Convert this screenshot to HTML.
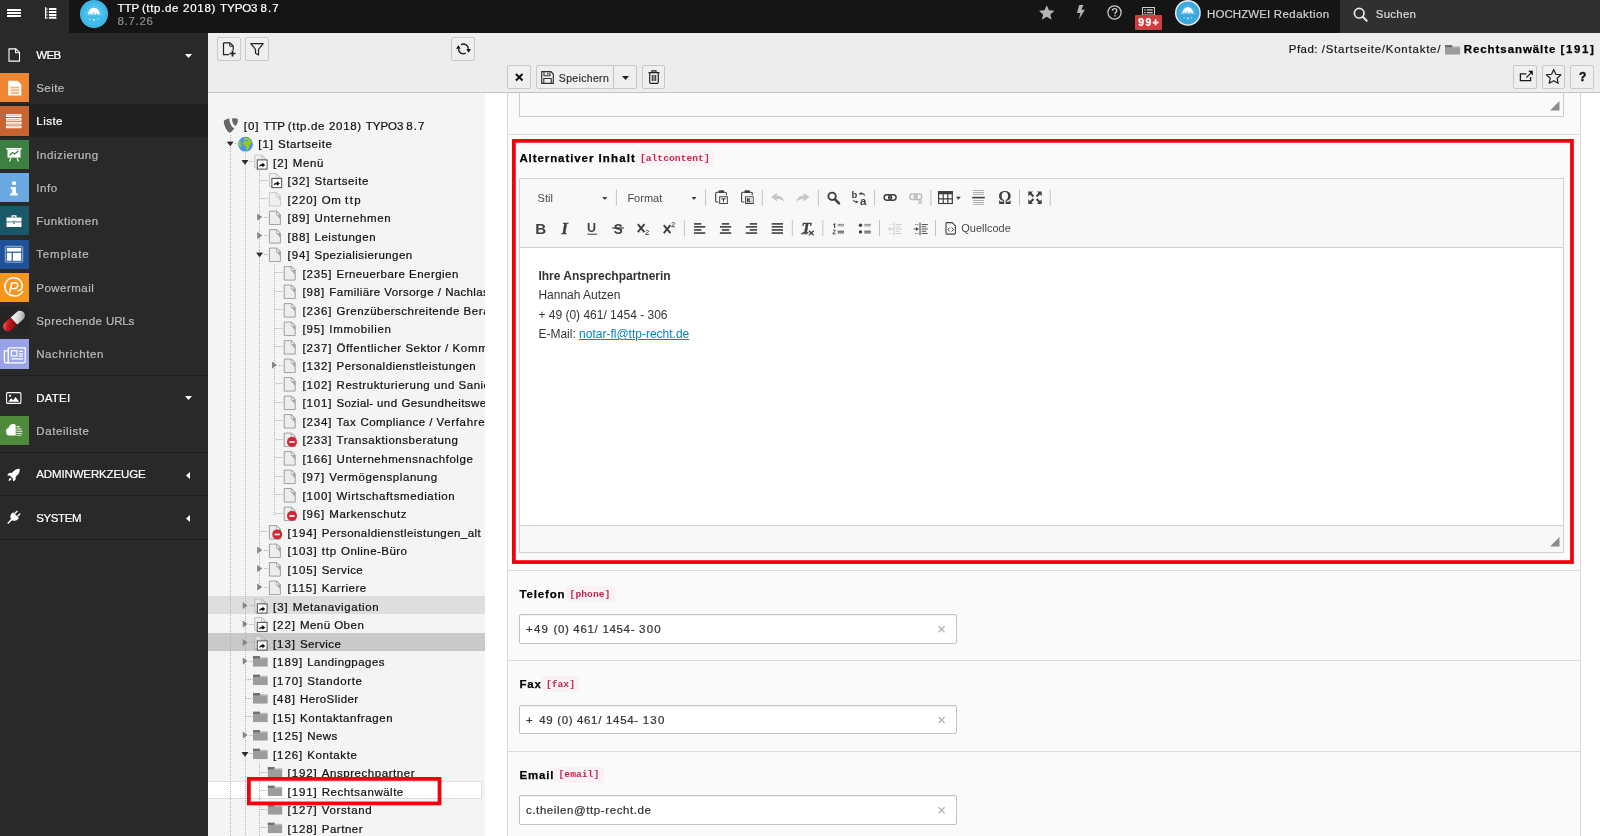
<!DOCTYPE html>
<html lang="de"><head><meta charset="utf-8"><title>TYPO3</title>
<style>

*{box-sizing:border-box;margin:0;padding:0}
html,body{width:1600px;height:836px;overflow:hidden;background:#fff;font-family:"Liberation Sans",sans-serif;}
body{position:relative;will-change:transform}
.a{position:absolute}
.t{-webkit-text-stroke:0.22px;position:absolute;white-space:nowrap;line-height:16px;height:16px;font-family:"Liberation Sans",sans-serif;}
svg{position:absolute;overflow:visible}
.btn{position:absolute;background:#efefef;border:1px solid #c9c9c9;border-radius:2px;}
.code{position:absolute;background:#f9f2f4;border-radius:3px;}
.ns{-webkit-text-stroke:0}
.mono{font-family:"Liberation Mono",monospace;}
.inp{position:absolute;background:#fff;border:1px solid #c2c2c2;border-radius:2px;box-shadow:inset 0 1px 1px rgba(0,0,0,.06);}
.sep{position:absolute;height:1px;background:#dcdcdc}
.vd{position:absolute;width:1px;background-image:linear-gradient(#b2b2b2 50%,rgba(0,0,0,0) 50%);background-size:1px 2px;}
.hd{position:absolute;height:1px;background-image:linear-gradient(90deg,#b2b2b2 50%,rgba(0,0,0,0) 50%);background-size:2px 1px;}
.cks{position:absolute;width:1px;background:#bcbcbc;height:16px}

</style></head>
<body>
<svg width="0" height="0" style="position:absolute">
<defs>
<symbol id="pg" viewBox="0 0 16 16"><path d="M2.500 1.500h7.500l3.500 3.500v10h-11z" fill="#ededed" stroke="#9f9f9f" stroke-width="1"/><path d="M9.600 1.600v3.900h3.800z" fill="#fbfbfb" stroke="#9f9f9f" stroke-width=".8"/><path d="M10 5.700h3.300v4z" fill="#a3a3a3"/></symbol>
<symbol id="sc" viewBox="0 0 16 16"><g opacity=".6"><path d="M1 .5h7l3.500 3.500v9.500h-10.500z" fill="#ededed" stroke="#9f9f9f" stroke-width="1"/><path d="M7.600 .6v3.900h3.800z" fill="#fbfbfb" stroke="#9f9f9f" stroke-width=".8"/></g><rect x="3.500" y="5.500" width="9.800" height="9.200" fill="#fff" stroke="#4d4d4d" stroke-width="1"/><path d="M5.300 12.600c.2-2 1.400-2.900 3.300-2.900v-1.500l2.800 2.400-2.800 2.400v-1.500c-1.500-.1-2.500.2-3.300 1.100z" fill="#111"/></symbol>
<symbol id="fo" viewBox="0 0 15 11" preserveAspectRatio="none"><path d="M0 0h7v2h8v9h-15z" fill="#9c9c9c"/><path d="M0 0h7v2.600h-7z" fill="#707070"/><path d="M7 1.300h8v1.500h-8z" fill="#bcbcbc"/></symbol>
<symbol id="hid" viewBox="0 0 10 10"><circle cx="5" cy="5" r="5" fill="#d02830"/><rect x="2.400" y="4.200" width="5.200" height="1.700" fill="#fff"/></symbol>
<symbol id="ad" viewBox="0 0 8 6"><path d="M0 .3h8l-4 5.4z" fill="#2a2a2a"/></symbol>
<symbol id="ar" viewBox="0 0 6 8"><path d="M.2 0v8l5.600-4z" fill="#858585"/></symbol>
<symbol id="globe" viewBox="0 0 16 16"><circle cx="8" cy="8" r="7.700" fill="#4696eb"/><path d="M6.300 1.700c1.600-.7 3.700-.6 5.300.3l1.900 1.900.9 2.300-.6 1-1.100-.3.400 1.500-1.500 1.900-.5 2.800-1.300 1.300-1-.5-.5-2.300.2-1.700-2-.5-1.200-1.800.6-2 1.600-1 2.500.6 1.500-.3-1.200-.9-2.200.3-1.300-.8z" fill="#98c81e"/><path d="M1.300 5.600l1.500-1.300.9 1.600-.8 2 1.100 2.400-.8 1.200-1.700-1.600-.9-2.400z" fill="#98c81e"/></symbol>
<symbol id="t3" viewBox="0 0 16 16"><path d="M11.700 10.400c-.2.100-.4.100-.6.100-1.900 0-4.700-6.500-4.700-8.700 0-.8.200-1.100.5-1.300-2.300.3-5.100 1.100-6 2.200-.2.300-.3.700-.3 1.200 0 3.400 3.700 11.300 6.300 11.300 1.200 0 3.200-2 4.800-4.800M10.500.300c2.400 0 4.800.400 4.800 1.700 0 2.700-1.700 6-2.600 6-1.600 0-3.500-4.300-3.500-6.500 0-1 .4-1.200 1.300-1.200" fill="#666"/></symbol>
</defs></svg>
<div class="a" style="left:0;top:0;width:1600px;height:33px;background:#151515"></div>
<div class="a" style="left:0;top:0;width:69px;height:33px;background:#292929"></div>
<div class="a" style="left:1339.5px;top:0;width:260.5px;height:33px;background:#303030"></div>
<div class="a" style="left:7px;top:9px;width:13.5px;height:2px;background:#fff;border-radius:.5px"></div>
<div class="a" style="left:7px;top:12px;width:13.5px;height:2px;background:#fff;border-radius:.5px"></div>
<div class="a" style="left:7px;top:15px;width:13.5px;height:2px;background:#fff;border-radius:.5px"></div>
<svg style="left:44px;top:6px" width="14" height="14" viewBox="44 6 14 14"><g fill="#fff"><rect x="45" y="7.200" width="1.200" height="11.700"/><rect x="46" y="8.7" width="2.300" height=".9" opacity=".85"/><rect x="49" y="8.1" width="7.400" height="2" rx=".3"/><rect x="46" y="11.549999999999999" width="2.300" height=".9" opacity=".85"/><rect x="49" y="10.95" width="7.400" height="2" rx=".3"/><rect x="46" y="14.5" width="2.300" height=".9" opacity=".85"/><rect x="49" y="13.9" width="7.400" height="2" rx=".3"/><rect x="46" y="17.400000000000002" width="2.300" height=".9" opacity=".85"/><rect x="49" y="16.8" width="7.400" height="2" rx=".3"/></g></svg>
<svg style="left:80px;top:-0.3000000000000007px" width="28" height="28" viewBox="0 0 28 28"><circle cx="14" cy="14" r="14" fill="#43bdea"/><circle cx="14" cy="14" r="12.300" fill="none" stroke="#2fa6d6" stroke-width=".6"/><g stroke="#a8e0f5" stroke-width=".5"><path d="M14 14.500l-8.500-3M14 14.500l-7-6M14 14.500l-3.500-8.300M14 14.500l0-9.300M14 14.500l3.500-8.300M14 14.500l7-6M14 14.500l8.500-3M14 14.500l-9 .3M14 14.500l9 .3"/></g><path d="M8 14.600c.3-3.900 2.800-6.800 6-6.800s5.700 2.900 6 6.800l-1.800-.1-1.300-1.800-1.700 2-1.500-3-2.200 3-1.400-1.600-.9 1.500z" fill="#fff"/><rect x="9.200" y="18.800" width="1.200" height="1.200" fill="#c9ecf9"/><rect x="13.200" y="19.200" width="1.500" height="1.500" fill="#fff"/><rect x="17.500" y="18.600" width="1" height="1.300" fill="#c9ecf9"/></svg>
<span class="t " style="left:117.50px;top:-0.20px;font-size:11.49px;color:#fff;"><span style="letter-spacing:-0.076px">TTP </span><span style="letter-spacing:0.675px">(ttp.de </span><span style="letter-spacing:0.740px">2018) </span><span style="letter-spacing:-0.048px">TYPO3 </span><span style="letter-spacing:1.063px">8.7</span></span>
<span class="t " style="left:117.50px;top:13.20px;font-size:11.49px;color:#8c8c8c;"><span style="letter-spacing:0.711px">8.7.26</span></span>
<svg style="left:1038.500px;top:5px" width="15.500" height="15" viewBox="0 0 16 15"><path d="M8 0l2.300 5.200 5.700.6-4.300 3.800 1.300 5.400-5-3-5 3 1.300-5.400-4.300-3.800 5.700-.6z" fill="#b4b4b4"/></svg>
<svg style="left:1075.500px;top:5px" width="9" height="14.500" viewBox="0 0 9 15"><path d="M3.200 0h4.300l-2 5h3.500l-6.200 10 1.600-6.800h-3.600z" fill="#b4b4b4"/></svg>
<svg style="left:1106.500px;top:5px" width="15" height="15" viewBox="0 0 15 15"><circle cx="7.500" cy="7.500" r="6.600" fill="none" stroke="#c9c9c9" stroke-width="1.300"/><path d="M5.300 5.800c.1-1.400 1-2.200 2.300-2.200 1.300 0 2.200.8 2.200 1.900 0 1.700-1.800 1.700-1.800 3.400" fill="none" stroke="#c9c9c9" stroke-width="1.400"/><rect x="7.200" y="10" width="1.500" height="1.500" fill="#b4b4b4"/></svg>
<svg style="left:1142px;top:7px" width="13" height="8.500" viewBox="0 0 13 8.500"><rect x=".5" y=".5" width="12" height="7.500" fill="none" stroke="#cfcfcf" stroke-width="1"/><g fill="#cfcfcf"><rect x="2.200" y="2.300" width="1.500" height="1.300"/><rect x="4.700" y="2.300" width="6" height="1.300"/><rect x="2.200" y="5" width="1.500" height="1.300"/><rect x="4.700" y="5" width="6" height="1.300"/></g></svg>
<div class="a" style="left:1135px;top:15px;width:26.500px;height:14.500px;background:#cf3e3e;border-radius:1px"></div>
<span class="t " style="left:1138.20px;top:15.30px;font-size:10.45px;color:#fff;font-weight:bold;-webkit-text-stroke:0.25px;"><span style="letter-spacing:1.387px">99+</span></span>
<svg style="left:1175.1px;top:-0.3000000000000007px" width="25.8" height="25.8" viewBox="0 0 28 28"><circle cx="14" cy="14" r="14" fill="#f2f2f2"/><circle cx="14" cy="14" r="12.500" fill="#3aa9e0"/><g stroke="#a8e0f5" stroke-width=".5"><path d="M14 14.500l-8.500-3M14 14.500l-7-6M14 14.500l-3.500-8.300M14 14.500l0-9.300M14 14.500l3.500-8.300M14 14.500l7-6M14 14.500l8.500-3M14 14.500l-9 .3M14 14.500l9 .3"/></g><path d="M8 14.600c.3-3.900 2.800-6.800 6-6.800s5.700 2.900 6 6.800l-1.800-.1-1.300-1.800-1.700 2-1.500-3-2.200 3-1.400-1.600-.9 1.500z" fill="#fff"/><rect x="9.200" y="18.800" width="1.200" height="1.200" fill="#c9ecf9"/><rect x="13.200" y="19.200" width="1.500" height="1.500" fill="#fff"/><rect x="17.500" y="18.600" width="1" height="1.300" fill="#c9ecf9"/></svg>
<span class="t " style="left:1207.00px;top:5.60px;font-size:11.49px;color:#cfcfcf;"><span style="letter-spacing:0.102px">HOCHZWEI </span><span style="letter-spacing:0.481px">Redaktion</span></span>
<svg style="left:1353px;top:6.500px" width="15" height="15" viewBox="0 0 15 15"><circle cx="6.200" cy="6.200" r="4.800" fill="none" stroke="#e6e6e6" stroke-width="1.700"/><path d="M9.700 9.700l4 4" stroke="#e6e6e6" stroke-width="2" stroke-linecap="round"/></svg>
<span class="t " style="left:1375.75px;top:5.60px;font-size:11.49px;color:#d6d6d6;"><span style="letter-spacing:0.256px">Suchen</span></span>
<div class="a" style="left:0;top:33px;width:207.5px;height:803px;background:#292929"></div>
<div class="a" style="left:0;top:104.3px;width:207.5px;height:33px;background:#212121"></div>
<div class="a" style="left:0;top:374.5px;width:207.5px;height:1px;background:#1f1f1f"></div>
<div class="a" style="left:0;top:451.5px;width:207.5px;height:1px;background:#1f1f1f"></div>
<div class="a" style="left:0;top:495.0px;width:207.5px;height:1px;background:#1f1f1f"></div>
<div class="a" style="left:0;top:538.5px;width:207.5px;height:1px;background:#1f1f1f"></div>
<svg style="left:7.5px;top:48px" width="13" height="14" viewBox="0 0 13 14"><path d="M1 .9h6.8l3.700 3.700v8.500h-10.500z" fill="none" stroke="#fff" stroke-width="1.100"/><path d="M7.600 1v3.800h3.800" fill="none" stroke="#fff" stroke-width="1.100"/></svg>
<span class="t " style="left:36.25px;top:47.20px;font-size:11.49px;color:#fff;"><span style="letter-spacing:-0.586px">WEB</span></span>
<svg style="left:184.5px;top:53.5px" width="7" height="4" viewBox="0 0 7 4"><path d="M0 0h7l-3.500 4z" fill="#fff"/></svg>
<div class="a" style="left:0;top:73.10px;width:28.8px;height:29.2px;background:#ee8634"></div>
<svg style="left:5.65px;top:78.95px" width="17.5" height="17.5" viewBox="0 0 16 16"><path d="M2 1.500h8.500l3.500 3.500v10h-12z" fill="#fff"/><g fill="#f4b27c"><rect x="4" y="7" width="8" height="1.600"/><rect x="4" y="9.500" width="8" height="1.600"/><rect x="4" y="12" width="8" height="1.600"/></g></svg>
<span class="t " style="left:36.25px;top:80.00px;font-size:11.49px;color:#b9b9b9;"><span style="letter-spacing:0.452px">Seite</span></span>
<div class="a" style="left:0;top:106.38px;width:28.8px;height:29.2px;background:#c86432"></div>
<svg style="left:6.40px;top:112.98px" width="16" height="16" viewBox="0 0 16 16"><g fill="#fff"><rect x="0" y="1.300" width="15.500" height="2.800" rx=".6"/><rect x="0" y="5" width="15.500" height="2.800" rx=".6"/><rect x="0" y="8.700" width="15.500" height="2.800" rx=".6"/><rect x="0" y="12.400" width="15.500" height="2.800" rx=".6"/></g><g fill="#e3a988"><rect x="1.200" y="2.300" width="13" height=".8"/><rect x="1.200" y="6" width="13" height=".8"/><rect x="1.200" y="9.700" width="13" height=".8"/><rect x="1.200" y="13.400" width="13" height=".8"/></g></svg>
<span class="t " style="left:36.25px;top:113.28px;font-size:11.49px;color:#fff;"><span style="letter-spacing:0.497px">Liste</span></span>
<div class="a" style="left:0;top:139.66px;width:28.8px;height:29.2px;background:#3e8042"></div>
<svg style="left:6.40px;top:146.26px" width="16" height="16" viewBox="0 0 16 16"><rect x=".3" y="2" width="15.400" height="1.600" fill="#fff"/><rect x="1.500" y="3.600" width="13" height="8" fill="#fff"/><path d="M3.500 9.500l3-3 2 1.500 4-3" fill="none" stroke="#3e8042" stroke-width="1.100"/><path d="M5 12l-1.500 3.500M11 12l1.500 3.500" stroke="#fff" stroke-width="1.100"/></svg>
<span class="t " style="left:36.25px;top:146.56px;font-size:11.49px;color:#b9b9b9;"><span style="letter-spacing:0.579px">Indizierung</span></span>
<div class="a" style="left:0;top:172.94px;width:28.8px;height:29.2px;background:#6aa9e2"></div>
<svg style="left:6.40px;top:179.54px" width="16" height="16" viewBox="0 0 16 16"><g fill="#fff"><rect x="6.200" y="1.500" width="3.700" height="3.400"/><path d="M4.700 7h5.200v6.300h1.800v2.200h-7.400v-2.200h1.800v-4.100h-1.400z"/></g></svg>
<span class="t " style="left:36.25px;top:179.84px;font-size:11.49px;color:#b9b9b9;"><span style="letter-spacing:0.604px">Info</span></span>
<div class="a" style="left:0;top:206.22px;width:28.8px;height:29.2px;background:#1a5768"></div>
<svg style="left:6.40px;top:212.82px" width="16" height="16" viewBox="0 0 16 16"><g fill="#fff"><path d="M5.500 2.300h5v2.300h-1.200v-1.200h-2.600v1.200h-1.200z"/><rect x=".5" y="4.500" width="15" height="4"/><rect x=".5" y="9.300" width="15" height="4.700"/></g><rect x="7" y="7.800" width="2" height="2.800" fill="#1a5768"/><rect x="7.500" y="8.300" width="1" height="1.800" fill="#fff"/></svg>
<span class="t " style="left:36.25px;top:213.12px;font-size:11.49px;color:#b9b9b9;"><span style="letter-spacing:0.553px">Funktionen</span></span>
<div class="a" style="left:0;top:239.50px;width:28.8px;height:29.2px;background:#20529a"></div>
<svg style="left:6.40px;top:246.10px" width="16" height="16" viewBox="0 0 16 16"><rect x="-.7" y=".3" width="17.400" height="15.900" rx="1" fill="none" stroke="#a8bedd" stroke-width=".9"/><g fill="#fff"><rect x=".8" y="1.800" width="14.400" height="3.800"/><rect x=".8" y="6.800" width="4.800" height="8"/><rect x="6.800" y="6.800" width="8.400" height="8"/></g></svg>
<span class="t " style="left:36.25px;top:246.40px;font-size:11.49px;color:#b9b9b9;"><span style="letter-spacing:0.828px">Template</span></span>
<div class="a" style="left:0;top:272.78px;width:28.8px;height:29.2px;background:#f5961e"></div>
<svg style="left:4.1px;top:277.08px" width="19.5" height="19.5" viewBox="0 0 19 19"><g fill="none" stroke="#fff" stroke-width="1.500" stroke-linecap="round"><path d="M18.300 14.200C16 17.500 12.500 18.700 9.300 18.400 4.200 18 .5 13.800 .8 9 1.100 4 5.300 .5 10 .8 14.800 1.100 18 4.800 17.800 9 17.700 11.300 16.300 13.300 13.800 13.200"/><path d="M7.600 5.600L5.700 14.600"/><path d="M7.300 7C8.500 5.200 13.300 4.600 13.400 8 13.500 11.200 9.500 12.300 6.800 10.800"/></g></svg>
<span class="t " style="left:36.25px;top:279.68px;font-size:11.49px;color:#b9b9b9;"><span style="letter-spacing:0.494px">Powermail</span></span>
<div class="a" style="left:0;top:306.06px;width:28.8px;height:29.2px;background:#252525"></div>
<svg style="left:.9px;top:308.06px" width="26" height="26" viewBox="0 0 24 24"><defs><linearGradient id="pr" x1="0" y1="0" x2="1" y2="1"><stop offset="0" stop-color="#f2787c"/><stop offset=".45" stop-color="#c4161c"/><stop offset="1" stop-color="#7a0a0e"/></linearGradient><linearGradient id="pw" x1="0" y1="0" x2="1" y2="1"><stop offset="0" stop-color="#fff"/><stop offset=".5" stop-color="#d8d8d8"/><stop offset="1" stop-color="#8a8a8a"/></linearGradient></defs><g transform="rotate(-42 12 12)"><path d="M4.500 7.500h7.500v9h-7.500a4.500 4.500 0 0 1 0-9z" fill="url(#pr)"/><path d="M12 7.500h7.500a4.500 4.500 0 0 1 0 9h-7.500z" fill="url(#pw)"/></g></svg>
<span class="t " style="left:36.25px;top:312.96px;font-size:11.49px;color:#b9b9b9;"><span style="letter-spacing:0.420px">Sprechende </span><span style="letter-spacing:-0.146px">URLs</span></span>
<div class="a" style="left:0;top:339.34px;width:28.8px;height:29.2px;background:#9aa3e6"></div>
<svg style="left:5.15px;top:344.69px" width="18.5" height="18.5" viewBox="0 0 16 16"><g fill="none" stroke="#fff" stroke-width="1.100"><path d="M2.800 2.500h14.700v11.500a1.500 1.500 0 0 1-1.500 1.500h-15a1.500 1.500 0 0 1-1.500-1.500v-9h3.300"/><path d="M2.800 2.500v11.500a1.500 1.500 0 0 1-1.500 1.500"/><rect x="5.500" y="5" width="4.800" height="4.500"/><path d="M12 5.500h3.500M12 7.700h3.500M12 9.700h3.500M5.500 12h10"/></g></svg>
<span class="t " style="left:36.25px;top:346.24px;font-size:11.49px;color:#b9b9b9;"><span style="letter-spacing:0.577px">Nachrichten</span></span>
<svg style="left:6px;top:391.500px" width="15.500" height="12" viewBox="0 0 15.500 12"><rect x=".6" y=".6" width="14.300" height="10.800" rx="1" fill="none" stroke="#fff" stroke-width="1.100"/><path d="M2.200 9.700l3-3.400 2 2 2.400-3.200 3.600 4.600z" fill="#fff"/><circle cx="4" cy="3.800" r="1.100" fill="#fff"/></svg>
<span class="t " style="left:36.25px;top:389.90px;font-size:11.49px;color:#fff;"><span style="letter-spacing:0.253px">DATEI</span></span>
<svg style="left:184.500px;top:396.200px" width="7" height="4" viewBox="0 0 7 4"><path d="M0 0h7l-3.500 4z" fill="#fff"/></svg>
<div class="a" style="left:0;top:416px;width:28.800px;height:29.200px;background:#4f8a3c"></div>
<svg style="left:5px;top:423px" width="18" height="14" viewBox="0 0 18 14"><path d="M1 8.500c0-2.500 1.500-3.300 2.500-3.400.5-2.500 2.500-4 4.800-4 1 0 1.900.4 2.400.8v10.600h-6.700c-2 0-3-1.700-3-4z" fill="#fff"/><g fill="#cfe3c7"><rect x="11.300" y="3" width="3.500" height="1.300"/><rect x="11.300" y="5.300" width="5" height="1.300"/><rect x="11.300" y="7.600" width="6" height="1.300"/><rect x="11.300" y="9.900" width="6" height="1.300"/><rect x="11.300" y="12.200" width="5" height=".8"/></g></svg>
<span class="t " style="left:36.25px;top:423.30px;font-size:11.49px;color:#b9b9b9;"><span style="letter-spacing:0.603px">Dateiliste</span></span>
<svg style="left:7.200px;top:468.200px" width="13.500" height="13.500" viewBox="0 0 14 14"><path d="M13.300 .7c-3.500 0-6 1.300-8 4.300l-3.300.3-1.800 2.500 3 .3 2.800 2.800.3 3 2.500-1.800.3-3.300c3-2 4.300-4.600 4.200-8.100z" fill="#fff"/><path d="M3.300 10.200c-1 .6-1.500 1.800-1.700 3.200 1.400-.2 2.600-.7 3.200-1.700z" fill="#fff"/></svg>
<span class="t " style="left:36.25px;top:466.40px;font-size:11.49px;color:#fff;"><span style="letter-spacing:-0.121px">ADMINWERKZEUGE</span></span>
<svg style="left:186px;top:471.500px" width="4" height="7" viewBox="0 0 4 7"><path d="M4 0v7l-4-3.500z" fill="#fff"/></svg>
<svg style="left:7px;top:511px" width="13.200" height="13.200" viewBox="0 0 15 15"><g transform="rotate(45 7.500 7.500)" fill="#fff"><rect x="4.500" y="-1" width="1.600" height="4.500" rx=".6"/><rect x="8.900" y="-1" width="1.600" height="4.500" rx=".6"/><path d="M2.800 3.600h9.400v2.600c0 2.300-1.600 4-3.700 4.400v1.400h-2v-1.400c-2.100-.4-3.700-2.100-3.700-4.400z"/><rect x="6.700" y="11.500" width="1.600" height="5.500"/></g></svg>
<span class="t " style="left:36.25px;top:510.20px;font-size:11.49px;color:#fff;"><span style="letter-spacing:-0.391px">SYSTEM</span></span>
<svg style="left:186px;top:514.500px" width="4" height="7" viewBox="0 0 4 7"><path d="M4 0v7l-4-3.500z" fill="#fff"/></svg>
<div class="a" style="left:207.5px;top:33px;width:1392.5px;height:59.5px;background:#ededed;border-bottom:1px solid #c3c3c3"></div>
<div class="a" style="left:207.5px;top:92.5px;width:277.5px;height:743.5px;background:#f4f4f4"></div>
<div class="btn" style="left:217.2px;top:37.2px;width:23.5px;height:23.5px"></div>
<div class="btn" style="left:245px;top:37.2px;width:23.5px;height:23.5px"></div>
<div class="btn" style="left:451.2px;top:37.2px;width:23.5px;height:23.5px"></div>
<svg style="left:221.500px;top:41.500px" width="15" height="15" viewBox="0 0 15 15"><path d="M1.500 .8h6.500l3.200 3.200v4.200M7 12.700h-5.500v-11.900" fill="none" stroke="#222" stroke-width="1.200"/><path d="M7.800 1v3.200h3.200" fill="none" stroke="#222" stroke-width="1"/><path d="M10.500 8.500v6M7.500 11.500h6" stroke="#222" stroke-width="1.700"/></svg>
<svg style="left:250px;top:42.500px" width="14" height="13" viewBox="0 0 14 13"><path d="M.8 .7h12.400l-4.700 5.700v5.600l-3-1.700v-3.900z" fill="none" stroke="#222" stroke-width="1.200" stroke-linejoin="round"/></svg>
<svg style="left:0;top:0" width="1600" height="100" viewBox="0 0 1600 100"><path d="M461.10 44.57A4.9 4.9 0 0 1 468.30 48.73" fill="none" stroke="#1a1a1a" stroke-width="1.400"/><path d="M465.70 53.23A4.9 4.9 0 0 1 458.50 49.07" fill="none" stroke="#1a1a1a" stroke-width="1.400"/><path d="M466.3 49.1h4.700l-2.400 3.600z" fill="#111"/><path d="M456 48.8h4.800l-2.400-3.600z" fill="#111"/></svg>
<div class="a" style="left:207.5px;top:596.30px;width:277.5px;height:17.5px;background:#dedede"></div>
<div class="a" style="left:207.5px;top:633.30px;width:277.5px;height:17.5px;background:#c9c9c9"></div>
<div class="a" style="left:207.5px;top:780.8px;width:274.3px;height:18.4px;background:#fff;border:1px solid #dedede;border-left:none"></div>
<div class="vd" style="left:229.80px;top:135.00px;height:701.00px"></div>
<div class="vd" style="left:244.60px;top:152.00px;height:684.00px"></div>
<div class="vd" style="left:259.40px;top:171.00px;height:417.50px"></div>
<div class="vd" style="left:259.40px;top:763.00px;height:73.00px"></div>
<div class="vd" style="left:274.20px;top:263.50px;height:251.00px"></div>
<div class="a" style="left:207.5px;top:92.5px;width:277.5px;height:743.5px;overflow:hidden">
<span class="t " style="left:36.25px;top:25.20px;font-size:11.49px;color:#111;"><span style="letter-spacing:0.935px">[0] </span><span style="letter-spacing:-0.085px">TTP </span><span style="letter-spacing:0.667px">(ttp.de </span><span style="letter-spacing:0.731px">2018) </span><span style="letter-spacing:-0.058px">TYPO3 </span><span style="letter-spacing:1.049px">8.7</span></span>
<span class="t " style="left:50.75px;top:43.70px;font-size:11.49px;color:#111;"><span style="letter-spacing:0.935px">[1] </span><span style="letter-spacing:0.593px">Startseite</span></span>
<span class="t " style="left:65.50px;top:62.20px;font-size:11.49px;color:#111;"><span style="letter-spacing:0.935px">[2] </span><span style="letter-spacing:0.612px">Menü</span></span>
<span class="t " style="left:80.10px;top:80.70px;font-size:11.49px;color:#111;"><span style="letter-spacing:0.916px">[32] </span><span style="letter-spacing:0.593px">Startseite</span></span>
<span class="t " style="left:80.10px;top:99.20px;font-size:11.49px;color:#111;"><span style="letter-spacing:0.903px">[220] </span><span style="letter-spacing:0.534px">Om </span><span style="letter-spacing:1.440px">ttp</span></span>
<span class="t " style="left:80.10px;top:117.70px;font-size:11.49px;color:#111;"><span style="letter-spacing:0.916px">[89] </span><span style="letter-spacing:0.664px">Unternehmen</span></span>
<span class="t " style="left:80.10px;top:136.20px;font-size:11.49px;color:#111;"><span style="letter-spacing:0.916px">[88] </span><span style="letter-spacing:0.534px">Leistungen</span></span>
<span class="t " style="left:80.10px;top:154.70px;font-size:11.49px;color:#111;"><span style="letter-spacing:0.916px">[94] </span><span style="letter-spacing:0.435px">Spezialisierungen</span></span>
<span class="t " style="left:94.90px;top:173.20px;font-size:11.49px;color:#111;"><span style="letter-spacing:0.903px">[235] </span><span style="letter-spacing:0.454px">Erneuerbare </span><span style="letter-spacing:0.479px">Energien</span></span>
<span class="t " style="left:94.90px;top:191.70px;font-size:11.49px;color:#111;"><span style="letter-spacing:0.916px">[98] </span><span style="letter-spacing:0.450px">Familiäre </span><span style="letter-spacing:0.480px">Vorsorge </span><span style="letter-spacing:0.528px">/ </span><span style="letter-spacing:0.341px">Nachlass</span></span>
<span class="t " style="left:94.90px;top:210.20px;font-size:11.49px;color:#111;"><span style="letter-spacing:0.903px">[236] </span><span style="letter-spacing:0.479px">Grenzüberschreitende </span><span style="letter-spacing:0.652px">Beratung</span></span>
<span class="t " style="left:94.90px;top:228.70px;font-size:11.49px;color:#111;"><span style="letter-spacing:0.916px">[95] </span><span style="letter-spacing:0.669px">Immobilien</span></span>
<span class="t " style="left:94.90px;top:247.20px;font-size:11.49px;color:#111;"><span style="letter-spacing:0.903px">[237] </span><span style="letter-spacing:0.554px">Öffentlicher </span><span style="letter-spacing:0.459px">Sektor </span><span style="letter-spacing:0.528px">/ </span><span style="letter-spacing:0.672px">Kommunen</span></span>
<span class="t " style="left:94.90px;top:265.70px;font-size:11.49px;color:#111;"><span style="letter-spacing:0.903px">[132] </span><span style="letter-spacing:0.469px">Personaldienstleistungen</span></span>
<span class="t " style="left:94.90px;top:284.20px;font-size:11.49px;color:#111;"><span style="letter-spacing:0.903px">[102] </span><span style="letter-spacing:0.552px">Restrukturierung </span><span style="letter-spacing:0.559px">und </span><span style="letter-spacing:0.495px">Sanierung</span></span>
<span class="t " style="left:94.90px;top:302.70px;font-size:11.49px;color:#111;"><span style="letter-spacing:0.903px">[101] </span><span style="letter-spacing:0.256px">Sozial- </span><span style="letter-spacing:0.559px">und </span><span style="letter-spacing:0.457px">Gesundheitswesen</span></span>
<span class="t " style="left:94.90px;top:321.20px;font-size:11.49px;color:#111;"><span style="letter-spacing:0.903px">[234] </span><span style="letter-spacing:0.693px">Tax </span><span style="letter-spacing:0.447px">Compliance </span><span style="letter-spacing:0.528px">/ </span><span style="letter-spacing:0.653px">Verfahren</span></span>
<span class="t " style="left:94.90px;top:339.70px;font-size:11.49px;color:#111;"><span style="letter-spacing:0.903px">[233] </span><span style="letter-spacing:0.563px">Transaktionsberatung</span></span>
<span class="t " style="left:94.90px;top:358.20px;font-size:11.49px;color:#111;"><span style="letter-spacing:0.903px">[166] </span><span style="letter-spacing:0.556px">Unternehmensnachfolge</span></span>
<span class="t " style="left:94.90px;top:376.70px;font-size:11.49px;color:#111;"><span style="letter-spacing:0.916px">[97] </span><span style="letter-spacing:0.595px">Vermögensplanung</span></span>
<span class="t " style="left:94.90px;top:395.20px;font-size:11.49px;color:#111;"><span style="letter-spacing:0.903px">[100] </span><span style="letter-spacing:0.608px">Wirtschaftsmediation</span></span>
<span class="t " style="left:94.90px;top:413.70px;font-size:11.49px;color:#111;"><span style="letter-spacing:0.916px">[96] </span><span style="letter-spacing:0.515px">Markenschutz</span></span>
<span class="t " style="left:80.10px;top:432.20px;font-size:11.49px;color:#111;"><span style="letter-spacing:0.903px">[194] </span><span style="letter-spacing:0.448px">Personaldienstleistungen_alt</span></span>
<span class="t " style="left:80.10px;top:450.70px;font-size:11.49px;color:#111;"><span style="letter-spacing:0.903px">[103] </span><span style="letter-spacing:0.825px">ttp </span><span style="letter-spacing:0.471px">Online-Büro</span></span>
<span class="t " style="left:80.10px;top:469.20px;font-size:11.49px;color:#111;"><span style="letter-spacing:0.903px">[105] </span><span style="letter-spacing:0.445px">Service</span></span>
<span class="t " style="left:80.10px;top:487.70px;font-size:11.49px;color:#111;"><span style="letter-spacing:1.045px">[115] </span><span style="letter-spacing:0.514px">Karriere</span></span>
<span class="t " style="left:65.50px;top:506.20px;font-size:11.49px;color:#111;"><span style="letter-spacing:0.935px">[3] </span><span style="letter-spacing:0.615px">Metanavigation</span></span>
<span class="t " style="left:65.50px;top:524.70px;font-size:11.49px;color:#111;"><span style="letter-spacing:0.916px">[22] </span><span style="letter-spacing:0.451px">Menü </span><span style="letter-spacing:0.540px">Oben</span></span>
<span class="t " style="left:65.50px;top:543.20px;font-size:11.49px;color:#111;"><span style="letter-spacing:0.916px">[13] </span><span style="letter-spacing:0.445px">Service</span></span>
<span class="t " style="left:65.50px;top:561.70px;font-size:11.49px;color:#111;"><span style="letter-spacing:0.903px">[189] </span><span style="letter-spacing:0.477px">Landingpages</span></span>
<span class="t " style="left:65.50px;top:580.20px;font-size:11.49px;color:#111;"><span style="letter-spacing:0.903px">[170] </span><span style="letter-spacing:0.609px">Standorte</span></span>
<span class="t " style="left:65.50px;top:598.70px;font-size:11.49px;color:#111;"><span style="letter-spacing:0.916px">[48] </span><span style="letter-spacing:0.445px">HeroSlider</span></span>
<span class="t " style="left:65.50px;top:617.20px;font-size:11.49px;color:#111;"><span style="letter-spacing:0.916px">[15] </span><span style="letter-spacing:0.599px">Kontaktanfragen</span></span>
<span class="t " style="left:65.50px;top:635.70px;font-size:11.49px;color:#111;"><span style="letter-spacing:0.903px">[125] </span><span style="letter-spacing:0.443px">News</span></span>
<span class="t " style="left:65.50px;top:654.20px;font-size:11.49px;color:#111;"><span style="letter-spacing:0.903px">[126] </span><span style="letter-spacing:0.633px">Kontakte</span></span>
<span class="t " style="left:80.10px;top:672.70px;font-size:11.49px;color:#111;"><span style="letter-spacing:0.903px">[192] </span><span style="letter-spacing:0.564px">Ansprechpartner</span></span>
<span class="t " style="left:80.10px;top:691.20px;font-size:11.49px;color:#111;"><span style="letter-spacing:0.903px">[191] </span><span style="letter-spacing:0.514px">Rechtsanwälte</span></span>
<span class="t " style="left:80.10px;top:709.70px;font-size:11.49px;color:#111;"><span style="letter-spacing:0.903px">[127] </span><span style="letter-spacing:0.648px">Vorstand</span></span>
<span class="t " style="left:80.10px;top:728.20px;font-size:11.49px;color:#111;"><span style="letter-spacing:0.903px">[128] </span><span style="letter-spacing:0.519px">Partner</span></span>
</div>
<svg style="left:0;top:0" width="485" height="836" viewBox="0 0 485 836"><use href="#t3" x="223.20" y="118.00" width="15.4" height="15.4" /><use href="#ad" x="226.65" y="141.30" width="7.2" height="5.3" /><path d="M234.75 143.50H237.25" stroke="#aaa" stroke-width="1" stroke-dasharray="1 1"/><use href="#globe" x="237.80" y="136.50" width="15.4" height="15.4" /><use href="#ad" x="241.40" y="159.80" width="7.2" height="5.3" /><path d="M249.50 161.50H253.80" stroke="#aaa" stroke-width="1" stroke-dasharray="1 1"/><use href="#sc" x="253.80" y="154.40" width="16" height="16" /><path d="M260.60 180.50H268.40" stroke="#aaa" stroke-width="1" stroke-dasharray="1 1"/><use href="#sc" x="268.40" y="172.90" width="16" height="16" /><path d="M260.60 198.50H268.40" stroke="#aaa" stroke-width="1" stroke-dasharray="1 1"/><use href="#pg" x="266.90" y="191.10" width="16" height="16" opacity=".5"/><use href="#ar" x="257.00" y="213.50" width="5.4" height="7.2" /><path d="M264.10 217.50H268.40" stroke="#aaa" stroke-width="1" stroke-dasharray="1 1"/><use href="#pg" x="266.90" y="209.60" width="16" height="16" /><use href="#ar" x="257.00" y="232.00" width="5.4" height="7.2" /><path d="M264.10 235.50H268.40" stroke="#aaa" stroke-width="1" stroke-dasharray="1 1"/><use href="#pg" x="266.90" y="228.10" width="16" height="16" /><use href="#ad" x="256.00" y="252.30" width="7.2" height="5.3" /><path d="M264.10 254.50H268.40" stroke="#aaa" stroke-width="1" stroke-dasharray="1 1"/><use href="#pg" x="266.90" y="246.60" width="16" height="16" /><path d="M275.40 272.50H283.20" stroke="#aaa" stroke-width="1" stroke-dasharray="1 1"/><use href="#pg" x="281.70" y="265.10" width="16" height="16" /><path d="M275.40 291.50H283.20" stroke="#aaa" stroke-width="1" stroke-dasharray="1 1"/><use href="#pg" x="281.70" y="283.60" width="16" height="16" /><path d="M275.40 309.50H283.20" stroke="#aaa" stroke-width="1" stroke-dasharray="1 1"/><use href="#pg" x="281.70" y="302.10" width="16" height="16" /><path d="M275.40 328.50H283.20" stroke="#aaa" stroke-width="1" stroke-dasharray="1 1"/><use href="#pg" x="281.70" y="320.60" width="16" height="16" /><path d="M275.40 346.50H283.20" stroke="#aaa" stroke-width="1" stroke-dasharray="1 1"/><use href="#pg" x="281.70" y="339.10" width="16" height="16" /><use href="#ar" x="271.80" y="361.50" width="5.4" height="7.2" /><path d="M278.90 365.50H283.20" stroke="#aaa" stroke-width="1" stroke-dasharray="1 1"/><use href="#pg" x="281.70" y="357.60" width="16" height="16" /><path d="M275.40 383.50H283.20" stroke="#aaa" stroke-width="1" stroke-dasharray="1 1"/><use href="#pg" x="281.70" y="376.10" width="16" height="16" /><path d="M275.40 402.50H283.20" stroke="#aaa" stroke-width="1" stroke-dasharray="1 1"/><use href="#pg" x="281.70" y="394.60" width="16" height="16" /><path d="M275.40 420.50H283.20" stroke="#aaa" stroke-width="1" stroke-dasharray="1 1"/><use href="#pg" x="281.70" y="413.10" width="16" height="16" /><path d="M275.40 439.50H283.20" stroke="#aaa" stroke-width="1" stroke-dasharray="1 1"/><use href="#pg" x="281.70" y="431.60" width="16" height="16" /><use href="#hid" x="287.00" y="436.90" width="10" height="10" /><path d="M275.40 457.50H283.20" stroke="#aaa" stroke-width="1" stroke-dasharray="1 1"/><use href="#pg" x="281.70" y="450.10" width="16" height="16" /><path d="M275.40 476.50H283.20" stroke="#aaa" stroke-width="1" stroke-dasharray="1 1"/><use href="#pg" x="281.70" y="468.60" width="16" height="16" /><path d="M275.40 494.50H283.20" stroke="#aaa" stroke-width="1" stroke-dasharray="1 1"/><use href="#pg" x="281.70" y="487.10" width="16" height="16" /><path d="M275.40 513.50H283.20" stroke="#aaa" stroke-width="1" stroke-dasharray="1 1"/><use href="#pg" x="281.70" y="505.60" width="16" height="16" /><use href="#hid" x="287.00" y="510.90" width="10" height="10" /><path d="M260.60 531.50H268.40" stroke="#aaa" stroke-width="1" stroke-dasharray="1 1"/><use href="#pg" x="266.90" y="524.10" width="16" height="16" /><use href="#hid" x="272.20" y="529.40" width="10" height="10" /><use href="#ar" x="257.00" y="546.50" width="5.4" height="7.2" /><path d="M264.10 550.50H268.40" stroke="#aaa" stroke-width="1" stroke-dasharray="1 1"/><use href="#pg" x="266.90" y="542.60" width="16" height="16" /><use href="#ar" x="257.00" y="565.00" width="5.4" height="7.2" /><path d="M264.10 568.50H268.40" stroke="#aaa" stroke-width="1" stroke-dasharray="1 1"/><use href="#pg" x="266.90" y="561.10" width="16" height="16" /><use href="#ar" x="257.00" y="583.50" width="5.4" height="7.2" /><path d="M264.10 587.50H268.40" stroke="#aaa" stroke-width="1" stroke-dasharray="1 1"/><use href="#pg" x="266.90" y="579.60" width="16" height="16" /><use href="#ar" x="242.40" y="602.00" width="5.4" height="7.2" /><path d="M249.50 605.50H253.80" stroke="#aaa" stroke-width="1" stroke-dasharray="1 1"/><use href="#sc" x="253.80" y="598.40" width="16" height="16" /><use href="#ar" x="242.40" y="620.50" width="5.4" height="7.2" /><path d="M249.50 624.50H253.80" stroke="#aaa" stroke-width="1" stroke-dasharray="1 1"/><use href="#sc" x="253.80" y="616.90" width="16" height="16" /><use href="#ar" x="242.40" y="639.00" width="5.4" height="7.2" /><path d="M249.50 642.50H253.80" stroke="#aaa" stroke-width="1" stroke-dasharray="1 1"/><use href="#sc" x="253.80" y="635.40" width="16" height="16" /><use href="#ar" x="242.40" y="657.50" width="5.4" height="7.2" /><path d="M249.50 661.50H252.50" stroke="#aaa" stroke-width="1" stroke-dasharray="1 1"/><use href="#fo" x="253.00" y="656.10" width="14.8" height="10.6" /><path d="M246.00 679.50H252.50" stroke="#aaa" stroke-width="1" stroke-dasharray="1 1"/><use href="#fo" x="253.00" y="674.60" width="14.8" height="10.6" /><path d="M246.00 698.50H252.50" stroke="#aaa" stroke-width="1" stroke-dasharray="1 1"/><use href="#fo" x="253.00" y="693.10" width="14.8" height="10.6" /><path d="M246.00 716.50H252.50" stroke="#aaa" stroke-width="1" stroke-dasharray="1 1"/><use href="#fo" x="253.00" y="711.60" width="14.8" height="10.6" /><use href="#ar" x="242.40" y="731.50" width="5.4" height="7.2" /><path d="M249.50 735.50H252.50" stroke="#aaa" stroke-width="1" stroke-dasharray="1 1"/><use href="#fo" x="253.00" y="730.10" width="14.8" height="10.6" /><use href="#ad" x="241.40" y="751.80" width="7.2" height="5.3" /><path d="M249.50 753.50H252.50" stroke="#aaa" stroke-width="1" stroke-dasharray="1 1"/><use href="#fo" x="253.00" y="748.60" width="14.8" height="10.6" /><path d="M260.60 772.50H267.10" stroke="#aaa" stroke-width="1" stroke-dasharray="1 1"/><use href="#fo" x="267.60" y="767.10" width="14.8" height="10.6" /><path d="M260.60 790.50H267.10" stroke="#aaa" stroke-width="1" stroke-dasharray="1 1"/><use href="#fo" x="267.60" y="785.60" width="14.8" height="10.6" /><path d="M260.60 809.50H267.10" stroke="#aaa" stroke-width="1" stroke-dasharray="1 1"/><use href="#fo" x="267.60" y="804.10" width="14.8" height="10.6" /><path d="M260.60 827.50H267.10" stroke="#aaa" stroke-width="1" stroke-dasharray="1 1"/><use href="#fo" x="267.60" y="822.60" width="14.8" height="10.6" /></svg>
<svg style="left:246.80px;top:777.10px" width="194.40" height="28.30" viewBox="0 0 194.40 28.30"><rect x="1.875" y="1.875" width="190.650" height="24.550" fill="none" stroke="#f3000c" stroke-width="3.75"/></svg>
<span class="t " style="left:1288.75px;top:41.00px;font-size:11.49px;color:#1a1a1a;"><span style="letter-spacing:0.489px">Pfad: </span><span style="letter-spacing:0.766px">/Startseite/Kontakte/</span></span>
<svg style="left:1444.60px;top:45.00px" width="15.4" height="9.8" ><use href="#fo"/></svg>
<span class="t " style="left:1463.75px;top:41.00px;font-size:11.49px;color:#000;font-weight:bold;-webkit-text-stroke:0.25px;"><span style="letter-spacing:0.933px">Rechtsanwälte </span><span style="letter-spacing:1.676px">[191]</span></span>
<div class="btn" style="left:507.2px;top:65px;width:23.5px;height:23.5px"></div>
<svg style="left:514.700px;top:72.600px" width="8.500" height="8.500" viewBox="0 0 9 9"><path d="M1 1l7 7M8 1l-7 7" stroke="#111" stroke-width="2.100"/></svg>
<div class="btn" style="left:535.5px;top:65px;width:101.3px;height:23.5px"></div>
<div class="a" style="left:613px;top:65px;width:1px;height:23.500px;background:#c3c3c3"></div>
<svg style="left:541px;top:70.500px" width="13" height="13" viewBox="0 0 13 13"><path d="M.7 .7h9.300l2.300 2.300v9.300h-11.600z" fill="none" stroke="#333" stroke-width="1.200"/><path d="M3 .8v4h6v-4M6.800 1.800v2" fill="none" stroke="#333" stroke-width="1.100"/><path d="M2.800 12.200v-4.700h7.400v4.700" fill="none" stroke="#333" stroke-width="1.100"/></svg>
<span class="t " style="left:558.80px;top:71.00px;font-size:10.45px;color:#333;"><span style="letter-spacing:0.368px">Speichern</span></span>
<svg style="left:621.500px;top:75.800px" width="7" height="4" viewBox="0 0 7 4"><path d="M0 0h7l-3.500 4z" fill="#222"/></svg>
<div class="btn" style="left:641.5px;top:65px;width:23.5px;height:23.5px"></div>
<svg style="left:647.500px;top:70px" width="12" height="14" viewBox="0 0 12 14"><path d="M.5 2.700h11M4 2.500v-1.600h4v1.600" fill="none" stroke="#222" stroke-width="1.200"/><path d="M1.700 3v9.200c0 .7.500 1.100 1.100 1.100h6.400c.6 0 1.100-.4 1.100-1.100v-9.200" fill="none" stroke="#222" stroke-width="1.200"/><path d="M4.300 5v6M6 5v6M7.700 5v6" stroke="#222" stroke-width="1"/></svg>
<div class="btn" style="left:1513.3px;top:65px;width:23.5px;height:23.5px"></div>
<div class="btn" style="left:1541.8px;top:65px;width:23.5px;height:23.5px"></div>
<div class="btn" style="left:1570.4px;top:65px;width:23.5px;height:23.5px"></div>
<svg style="left:0;top:0" width="1600" height="100" viewBox="0 0 1600 100"><path d="M1526.300 73.900h-5.900v6.800h10.200v-3.700" fill="none" stroke="#1a1a1a" stroke-width="1.300"/><path d="M1526.300 77.600l4.200-4.200" stroke="#1a1a1a" stroke-width="1.300"/><path d="M1528.200 70.800h4.600v4.600z" fill="#111"/><path d="M1553.700 69.600l2.150 4.700 5.150.55-3.850 3.450 1.100 5.050-4.550-2.600-4.550 2.600 1.100-5.050-3.850-3.450 5.150-.55z" fill="none" stroke="#1a1a1a" stroke-width="1.150" stroke-linejoin="round"/></svg>
<span class="t " style="left:1578.90px;top:68.80px;font-size:12.02px;color:#111;font-weight:bold;-webkit-text-stroke:0.25px;-webkit-text-stroke:0.4px;"><span style="letter-spacing:-0.638px">?</span></span>
<div class="a" style="left:485px;top:93px;width:1115px;height:743px;background:#fff"></div>
<div class="a" style="left:507.2px;top:93px;width:1073.6px;height:743px;background:#fafafa;border-left:1px solid #d7d7d7;border-right:1px solid #d7d7d7"></div>
<div class="a" style="left:518.800px;top:80px;width:1045.300px;height:37px;background:#fafafa;border:1px solid #cdcdcd;clip-path:inset(13px 0 0 0)"></div>
<svg style="left:1550px;top:101px" width="9.500" height="9.500" viewBox="0 0 10 10"><path d="M10 0v10h-10z" fill="#8c8c8c"/></svg>
<div class="sep" style="left:508px;top:133.5px;width:1072px"></div>
<div class="sep" style="left:508px;top:570.0px;width:1072px"></div>
<div class="sep" style="left:508px;top:660.3px;width:1072px"></div>
<div class="sep" style="left:508px;top:750.8px;width:1072px"></div>
<span class="t " style="left:519.40px;top:150.00px;font-size:11.49px;color:#000;font-weight:bold;-webkit-text-stroke:0.25px;"><span style="letter-spacing:0.925px">Alternativer </span><span style="letter-spacing:1.157px">Inhalt</span></span>
<div class="code" style="left:635.70px;top:149.80px;width:78.36px;height:16.4px"></div>
<span class="t mono" style="left:639.90px;top:150.70px;font-size:9.7px;font-weight:bold;-webkit-text-stroke:0;letter-spacing:0.009px;color:#c7254e">[altcontent]</span>
<div class="a" style="left:519px;top:178px;width:1045px;height:375px;background:#f8f8f8;border:1px solid #d1d1d1"></div>
<div class="a" style="left:520px;top:247px;width:1043px;height:279px;background:#fff;border-top:1px solid #d1d1d1;border-bottom:1px solid #d1d1d1"></div>
<svg style="left:1550px;top:537px" width="9.500" height="9.500" viewBox="0 0 10 10"><path d="M10 0v10h-10z" fill="#8c8c8c"/></svg>
<span class="t ns" style="left:537.60px;top:190.40px;font-size:11px;color:#484848;">Stil</span>
<span class="t ns" style="left:627.40px;top:190.40px;font-size:11px;color:#484848;">Format</span>
<svg style="left:0;top:0" width="1600" height="836" viewBox="0 0 1600 836"><rect x="615.90" y="189.5" width="1" height="16.20" fill="#c4c4c4"/><rect x="705.10" y="189.5" width="1" height="16.20" fill="#c4c4c4"/><rect x="761.80" y="189.5" width="1" height="16.20" fill="#c4c4c4"/><rect x="817.90" y="189.5" width="1" height="16.20" fill="#c4c4c4"/><rect x="874.10" y="189.5" width="1" height="16.20" fill="#c4c4c4"/><rect x="930.40" y="189.5" width="1" height="16.20" fill="#c4c4c4"/><rect x="1019.00" y="189.5" width="1" height="16.20" fill="#c4c4c4"/><rect x="1049.70" y="189.5" width="1" height="16.20" fill="#c4c4c4"/><path d="M602.30 197.10h5l-2.50 3z" fill="#3f3f3f"/><path d="M691.50 197.10h5l-2.50 3z" fill="#3f3f3f"/><path d="M718.8000000000001 192.2h-1.800a1.300 1.300 0 0 0-1.300 1.300v7.200a1.300 1.300 0 0 0 1.300 1.300h1.400" fill="none" stroke="#3f3f3f" stroke-width="1.100"/><path d="M723.8000000000001 192.2h1.300a1.300 1.300 0 0 1 1.300 1.300v1.800" fill="none" stroke="#3f3f3f" stroke-width="1.100"/><path d="M718.4000000000001 192.9v-1.200a1.400 1.400 0 0 1 1.400-1.400h3a1.400 1.400 0 0 1 1.400 1.400v1.200z" fill="#3f3f3f"/><rect x="719.7" y="196.800" width="7.600" height="6.700" fill="#fff" stroke="#3f3f3f" stroke-width="1"/><path d="M721.5 198.900h4M723.5 198.900v3.300" stroke="#3f3f3f" stroke-width="1.100" fill="none"/><path d="M744.7 192.2h-1.800a1.300 1.300 0 0 0-1.300 1.300v7.200a1.300 1.300 0 0 0 1.300 1.300h1.400" fill="none" stroke="#3f3f3f" stroke-width="1.100"/><path d="M749.7 192.2h1.300a1.300 1.300 0 0 1 1.300 1.300v1.800" fill="none" stroke="#3f3f3f" stroke-width="1.100"/><path d="M744.3000000000001 192.9v-1.200a1.400 1.400 0 0 1 1.400-1.400h3a1.400 1.400 0 0 1 1.400 1.400v1.200z" fill="#3f3f3f"/><rect x="745.6" y="196.800" width="7.600" height="6.700" fill="#fff" stroke="#3f3f3f" stroke-width="1"/><rect x="746.1" y="197.300" width="6.600" height="5.700" fill="#d9d9d9"/><path d="M747.5 198.300v4M747.5 200.800l2.200-2.300M748.4 200l1.800 2.300" stroke="#3f3f3f" stroke-width="1.100" fill="none"/><path d="M771.200 197.100l5.600-4.100v2.600c4 .1 6.600 2.200 7.400 6.400-1.800-2.300-3.900-3.100-7.400-3v2.500z" fill="#c6c6c6"/><path d="M809.400 197.100l-5.600-4.100v2.600c-4 .1-6.600 2.200-7.400 6.400 1.800-2.300 3.900-3.100 7.400-3v2.500z" fill="#c6c6c6"/><circle cx="832.100" cy="196.300" r="3.700" fill="none" stroke="#3f3f3f" stroke-width="1.900"/><path d="M835 199.300l4 4" stroke="#3f3f3f" stroke-width="2.500" stroke-linecap="round"/><text x="851.600" y="197.600" font-family="Liberation Sans" font-weight="bold" font-size="9.500" fill="#3f3f3f">b</text><text x="860" y="204.700" font-family="Liberation Sans" font-weight="bold" font-size="11.500" fill="#3f3f3f">a</text><path d="M860.300 193.600c2-.7 3.600 0 4.500 1.900" fill="none" stroke="#3f3f3f" stroke-width="1.100"/><path d="M858.600 193.900l2.700-1.900.3 3z" fill="#3f3f3f"/><path d="M853.300 199.800c.5 1.700 1.800 2.400 3.600 2.200" fill="none" stroke="#3f3f3f" stroke-width="1.100"/><path d="M858.600 201.800l-2.800 1.700-.1-3z" fill="#3f3f3f"/><g><rect x="884.1" y="194.7" width="7.400" height="5.500" rx="2.750" fill="none" stroke="#3f3f3f" stroke-width="1.400"/><rect x="888.6999999999999" y="194.7" width="7.400" height="5.500" rx="2.750" fill="none" stroke="#3f3f3f" stroke-width="1.400"/><rect x="888.1" y="196.75" width="4" height="1.400" fill="#3f3f3f"/></g><g><rect x="909.7" y="194.0" width="7.400" height="5.500" rx="2.750" fill="none" stroke="#bdbdbd" stroke-width="1.400"/><rect x="914.3" y="194.0" width="7.400" height="5.500" rx="2.750" fill="none" stroke="#bdbdbd" stroke-width="1.400"/><rect x="913.7" y="196.05" width="4" height="1.400" fill="#bdbdbd"/></g><path d="M917.800 199.800l4.400 4.400M922.200 199.800l-4.400 4.400" stroke="#bdbdbd" stroke-width="1.100"/><rect x="938.600" y="191.700" width="13.700" height="11.800" fill="#fff" stroke="#3f3f3f" stroke-width="1.200"/><rect x="938" y="191.100" width="14.900" height="3.200" fill="#3f3f3f"/><path d="M943.200 194v9.500M947.800 194v9.500M938.600 198.900h13.700" stroke="#3f3f3f" stroke-width="1.200"/><path d="M955.95 196.80h4.9l-2.45 3z" fill="#3f3f3f"/><rect x="973" y="190.10" width="11" height=".8" fill="#9d9d9d"/><rect x="973" y="192.00" width="11" height=".8" fill="#9d9d9d"/><rect x="973" y="193.90" width="11" height=".8" fill="#9d9d9d"/><rect x="973" y="200.10" width="11" height=".8" fill="#9d9d9d"/><rect x="973" y="202.00" width="11" height=".8" fill="#9d9d9d"/><rect x="973" y="203.90" width="11" height=".8" fill="#9d9d9d"/><rect x="972.200" y="196.800" width="12.600" height="1.600" fill="#3f3f3f"/><text x="998.300" y="204.100" font-family="Liberation Serif" font-weight="bold" font-size="18.300" fill="#3f3f3f" textLength="13.200" lengthAdjust="spacingAndGlyphs">Ω</text><path d="M1028.3 191.5h4.8l-1.6 1.6l2.7 2.7l-1.5 1.5l-2.7 -2.7l-1.7 1.7z" fill="#3f3f3f"/><path d="M1028.3 204.10000000000002h4.8l-1.6 -1.6l2.7 -2.7l-1.5 -1.5l-2.7 2.7l-1.7 -1.7z" fill="#3f3f3f"/><path d="M1041.7 191.5h-4.8l1.6 1.6l-2.7 2.7l1.5 1.5l2.7 -2.7l1.7 1.7z" fill="#3f3f3f"/><path d="M1041.7 204.10000000000002h-4.8l1.6 -1.6l-2.7 -2.7l1.5 -1.5l2.7 2.7l1.7 -1.7z" fill="#3f3f3f"/><rect x="683.90" y="220.2" width="1" height="16.00" fill="#c4c4c4"/><rect x="791.80" y="220.2" width="1" height="16.00" fill="#c4c4c4"/><rect x="822.30" y="220.2" width="1" height="16.00" fill="#c4c4c4"/><rect x="879.00" y="220.2" width="1" height="16.00" fill="#c4c4c4"/><rect x="935.00" y="220.2" width="1" height="16.00" fill="#c4c4c4"/><text x="535.200" y="233.600" font-family="Liberation Sans" font-weight="bold" font-size="15.200" fill="#3f3f3f">B</text><text x="561.600" y="233.600" font-family="Liberation Serif" font-weight="bold" font-style="italic" font-size="16.200" fill="#3f3f3f" stroke="#3f3f3f" stroke-width=".4">I</text><text x="587" y="231.700" font-family="Liberation Sans" font-weight="bold" font-size="12.500" fill="#3f3f3f">U</text><rect x="587.400" y="233.700" width="9.700" height="1" fill="#3f3f3f"/><text x="613.700" y="233.600" font-family="Liberation Sans" font-weight="bold" font-size="14.600" fill="#3f3f3f" textLength="9" lengthAdjust="spacingAndGlyphs">S</text><rect x="612.300" y="227.400" width="11.500" height="1.300" fill="#3f3f3f"/><path d="M637.8 224.2l6.600 8.0M644.4 224.2l-6.600 8.0" stroke="#3f3f3f" stroke-width="1.900"/><path d="M645.6999999999999 231.20000000000002c.3-1 3-1.100 3 .2 0 1.100-3 1.200-3 3.100h3.200" fill="none" stroke="#3f3f3f" stroke-width=".9"/><path d="M663.8 225.2l6.600 8.0M670.4 225.2l-6.600 8.0" stroke="#3f3f3f" stroke-width="1.900"/><path d="M671.6999999999999 223.4c.3-1 3-1.100 3 .2 0 1.100-3 1.200-3 3.100h3.200" fill="none" stroke="#3f3f3f" stroke-width=".9"/><rect x="694.00" y="223.10" width="7.4" height="1.600" fill="#3f3f3f"/><rect x="694.00" y="226.05" width="11.3" height="1.600" fill="#3f3f3f"/><rect x="694.00" y="229.15" width="7.4" height="1.600" fill="#3f3f3f"/><rect x="694.00" y="232.25" width="11.3" height="1.600" fill="#3f3f3f"/><rect x="721.85" y="223.10" width="7.4" height="1.600" fill="#3f3f3f"/><rect x="719.90" y="226.05" width="11.3" height="1.600" fill="#3f3f3f"/><rect x="721.85" y="229.15" width="7.4" height="1.600" fill="#3f3f3f"/><rect x="719.90" y="232.25" width="11.3" height="1.600" fill="#3f3f3f"/><rect x="749.70" y="223.10" width="7.4" height="1.600" fill="#3f3f3f"/><rect x="745.80" y="226.05" width="11.3" height="1.600" fill="#3f3f3f"/><rect x="749.70" y="229.15" width="7.4" height="1.600" fill="#3f3f3f"/><rect x="745.80" y="232.25" width="11.3" height="1.600" fill="#3f3f3f"/><rect x="771.70" y="223.10" width="11.3" height="1.600" fill="#3f3f3f"/><rect x="771.70" y="226.05" width="11.3" height="1.600" fill="#3f3f3f"/><rect x="771.70" y="229.15" width="11.3" height="1.600" fill="#3f3f3f"/><rect x="771.70" y="232.25" width="11.3" height="1.600" fill="#3f3f3f"/><text x="801.400" y="233.300" font-family="Liberation Serif" font-weight="bold" font-style="italic" font-size="15.500" fill="#3f3f3f" stroke="#3f3f3f" stroke-width=".45">T</text><rect x="801" y="233.300" width="6.500" height="1" fill="#3f3f3f"/><path d="M809 230.800l4.600 4.400M813.600 230.800l-4.600 4.400" stroke="#3f3f3f" stroke-width="1.300"/><path d="M833.400 224.700l1.300-.8v4.200" fill="none" stroke="#3f3f3f" stroke-width="1.100"/><path d="M832.900 230.500c.5-.9 2.400-.8 2.400.3 0 1-2.400 1.300-2.400 3h2.700" fill="none" stroke="#3f3f3f" stroke-width="1"/><rect x="837.600" y="223.90" width="6.400" height="1" fill="#8a8a8a"/><rect x="837.600" y="225.40" width="6.400" height="1" fill="#8a8a8a"/><rect x="837.600" y="230.70" width="6.400" height="1" fill="#3f3f3f"/><rect x="837.600" y="232.40" width="6.400" height="1" fill="#3f3f3f"/><circle cx="860.500" cy="225.300" r="1.700" fill="#3f3f3f"/><circle cx="860.500" cy="231.900" r="1.700" fill="#3f3f3f"/><rect x="864.300" y="223.90" width="6.500" height="1" fill="#8a8a8a"/><rect x="864.300" y="225.40" width="6.500" height="1" fill="#8a8a8a"/><rect x="864.300" y="230.70" width="6.500" height="1" fill="#3f3f3f"/><rect x="864.300" y="232.40" width="6.500" height="1" fill="#3f3f3f"/><rect x="893.50" y="222.600" width="1" height="12.800" fill="#c9c9c9"/><rect x="895.60" y="224.15" width="6.2" height=".9" fill="#c9c9c9"/><rect x="895.60" y="226.35" width="4.6" height=".9" fill="#c9c9c9"/><rect x="895.60" y="228.55" width="6.2" height=".9" fill="#c9c9c9"/><rect x="895.60" y="230.75" width="4.6" height=".9" fill="#c9c9c9"/><rect x="895.60" y="232.95" width="6.2" height=".9" fill="#c9c9c9"/><path d="M887.8 229l2.600-2v1.500h2.600v1h-2.600v1.500z" fill="#c9c9c9"/><rect x="889.3" y="224.20" width="1" height=".8" fill="#c9c9c9"/><rect x="891.3" y="224.20" width="1" height=".8" fill="#c9c9c9"/><rect x="889.3" y="233.00" width="1" height=".8" fill="#c9c9c9"/><rect x="891.3" y="233.00" width="1" height=".8" fill="#c9c9c9"/><rect x="919.50" y="222.600" width="1" height="12.800" fill="#3f3f3f"/><rect x="921.60" y="224.15" width="6.2" height=".9" fill="#3f3f3f"/><rect x="921.60" y="226.35" width="4.6" height=".9" fill="#3f3f3f"/><rect x="921.60" y="228.55" width="6.2" height=".9" fill="#3f3f3f"/><rect x="921.60" y="230.75" width="4.6" height=".9" fill="#3f3f3f"/><rect x="921.60" y="232.95" width="6.2" height=".9" fill="#3f3f3f"/><path d="M918.8 229l-2.600-2v1.500h-2.400v1h2.400v1.500z" fill="#3f3f3f"/><rect x="915.3" y="224.20" width="1" height=".8" fill="#3f3f3f"/><rect x="917.3" y="224.20" width="1" height=".8" fill="#3f3f3f"/><rect x="915.3" y="233.00" width="1" height=".8" fill="#3f3f3f"/><rect x="917.3" y="233.00" width="1" height=".8" fill="#3f3f3f"/><path d="M946.900 222.600h5.200l3.300 3.300v7.300a.9.900 0 0 1-.9.900h-7.600a.9.900 0 0 1-.9-.9v-9.700a.9.900 0 0 1 .9-.9z" fill="none" stroke="#3f3f3f" stroke-width="1.100"/><path d="M949.700 227.500l-1.800 2 1.800 2M951.700 227.500l1.800 2-1.800 2" fill="none" stroke="#3f3f3f" stroke-width="1"/></svg>
<span class="t ns" style="left:961.30px;top:220.20px;font-size:11px;color:#484848;">Quellcode</span>
<span class="t ns" style="left:538.40px;top:267.80px;font-size:12px;color:#333;font-weight:bold;">Ihre Ansprechpartnerin</span>
<span class="t ns" style="left:538.40px;top:287.20px;font-size:12px;color:#333;">Hannah Autzen</span>
<span class="t ns" style="left:538.40px;top:306.60px;font-size:12px;color:#333;">+ 49 (0) 461/ 1454 - 306</span>
<span class="t ns" style="left:538.40px;top:326.00px;font-size:12px;color:#333;">E-Mail: <span style="color:#0782c1;text-decoration:underline">notar-fl@ttp-recht.de</span></span>
<svg style="left:512.25px;top:139.25px" width="1061.85" height="424.95" viewBox="0 0 1061.85 424.95"><rect x="1.875" y="1.875" width="1058.100" height="421.200" fill="none" stroke="#f3000c" stroke-width="3.75"/></svg>
<span class="t " style="left:519.40px;top:586.00px;font-size:11.49px;color:#000;font-weight:bold;-webkit-text-stroke:0.25px;"><span style="letter-spacing:0.866px">Telefon</span></span>
<div class="code" style="left:565.40px;top:585.80px;width:49.21px;height:16.4px"></div>
<span class="t mono" style="left:569.60px;top:586.70px;font-size:9.7px;font-weight:bold;-webkit-text-stroke:0;letter-spacing:0.009px;color:#c7254e">[phone]</span>
<div class="inp" style="left:519px;top:614px;width:438px;height:30px"></div>
<span class="t " style="left:526.00px;top:621.30px;font-size:11.49px;color:#333;"><span style="letter-spacing:1.227px">+49 </span><span style="letter-spacing:0.618px">(0) </span><span style="letter-spacing:0.715px">461/ </span><span style="letter-spacing:0.675px">1454- </span><span style="letter-spacing:1.259px">300</span></span>
<span class="t " style="left:519.40px;top:676.30px;font-size:11.49px;color:#000;font-weight:bold;-webkit-text-stroke:0.25px;"><span style="letter-spacing:0.848px">Fax</span></span>
<div class="code" style="left:541.70px;top:676.10px;width:37.55px;height:16.4px"></div>
<span class="t mono" style="left:545.90px;top:677.00px;font-size:9.7px;font-weight:bold;-webkit-text-stroke:0;letter-spacing:0.009px;color:#c7254e">[fax]</span>
<div class="inp" style="left:519px;top:705px;width:438px;height:29px"></div>
<span class="t " style="left:526.00px;top:711.80px;font-size:11.49px;color:#333;"><span style="letter-spacing:1.615px">+ </span><span style="letter-spacing:0.699px">49 </span><span style="letter-spacing:0.618px">(0) </span><span style="letter-spacing:0.715px">461/ </span><span style="letter-spacing:0.675px">1454- </span><span style="letter-spacing:1.259px">130</span></span>
<span class="t " style="left:519.40px;top:766.70px;font-size:11.49px;color:#000;font-weight:bold;-webkit-text-stroke:0.25px;"><span style="letter-spacing:0.863px">Email</span></span>
<div class="code" style="left:554.31px;top:766.50px;width:49.21px;height:16.4px"></div>
<span class="t mono" style="left:558.51px;top:767.40px;font-size:9.7px;font-weight:bold;-webkit-text-stroke:0;letter-spacing:0.009px;color:#c7254e">[email]</span>
<div class="inp" style="left:519px;top:795px;width:438px;height:30px"></div>
<span class="t " style="left:526.00px;top:802.30px;font-size:11.49px;color:#333;"><span style="letter-spacing:0.588px">c.theilen@ttp-recht.de</span></span>
<svg style="left:0;top:0" width="1600" height="836" viewBox="0 0 1600 836"><path d="M938.6 626.30l6 6m0-6l-6 6" stroke="#b3b3b3" stroke-width="1.300" fill="none"/><path d="M938.6 717.00l6 6m0-6l-6 6" stroke="#b3b3b3" stroke-width="1.300" fill="none"/><path d="M938.6 807.30l6 6m0-6l-6 6" stroke="#b3b3b3" stroke-width="1.300" fill="none"/></svg>
</body></html>
